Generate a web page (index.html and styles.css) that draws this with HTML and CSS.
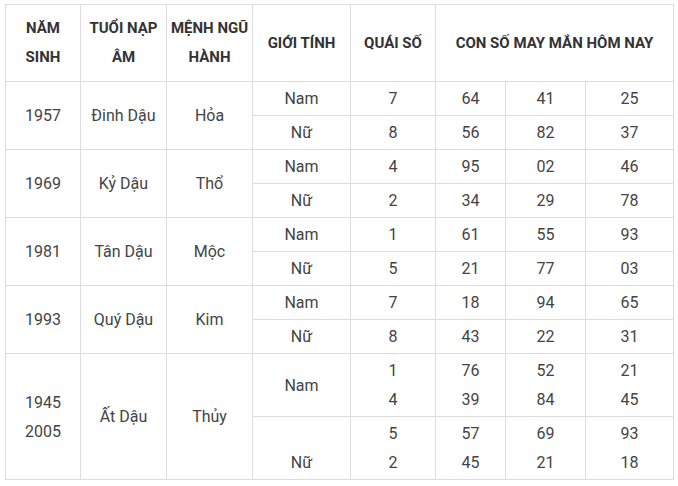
FILE: index.html
```html
<!DOCTYPE html>
<html lang="vi">
<head>
<meta charset="utf-8">
<title>Con số may mắn</title>
<link rel="stylesheet" href="styles.css">
</head>
<body>
<table class="lucky">
  <colgroup>
    <col class="c1"><col class="c2"><col class="c3"><col class="c4">
    <col class="c5"><col class="c6"><col class="c7"><col class="c8">
  </colgroup>
  <thead>
    <tr class="head">
      <th>NĂM<br>SINH</th>
      <th>TUỔI NẠP<br>ÂM</th>
      <th>MỆNH NGŨ<br>HÀNH</th>
      <th>GIỚI TÍNH</th>
      <th>QUÁI SỐ</th>
      <th colspan="3">CON SỐ MAY MẮN HÔM NAY</th>
    </tr>
  </thead>
  <tbody>
    <tr class="row"><td rowspan="2">1957</td><td rowspan="2">Đinh Dậu</td><td rowspan="2">Hỏa</td><td>Nam</td><td>7</td><td>64</td><td>41</td><td>25</td></tr>
    <tr class="row"><td>Nữ</td><td>8</td><td>56</td><td>82</td><td>37</td></tr>
    <tr class="row"><td rowspan="2">1969</td><td rowspan="2">Kỷ Dậu</td><td rowspan="2">Thổ</td><td>Nam</td><td>4</td><td>95</td><td>02</td><td>46</td></tr>
    <tr class="row"><td>Nữ</td><td>2</td><td>34</td><td>29</td><td>78</td></tr>
    <tr class="row"><td rowspan="2">1981</td><td rowspan="2">Tân Dậu</td><td rowspan="2">Mộc</td><td>Nam</td><td>1</td><td>61</td><td>55</td><td>93</td></tr>
    <tr class="row"><td>Nữ</td><td>5</td><td>21</td><td>77</td><td>03</td></tr>
    <tr class="row"><td rowspan="2">1993</td><td rowspan="2">Quý Dậu</td><td rowspan="2">Kim</td><td>Nam</td><td>7</td><td>18</td><td>94</td><td>65</td></tr>
    <tr class="row"><td>Nữ</td><td>8</td><td>43</td><td>22</td><td>31</td></tr>
    <tr class="tall"><td rowspan="2">1945<br>2005</td><td rowspan="2">Ất Dậu</td><td rowspan="2">Thủy</td><td>Nam</td><td>1<br>4</td><td>76<br>39</td><td>52<br>84</td><td>21<br>45</td></tr>
    <tr class="tall"><td><br>Nữ</td><td>5<br>2</td><td>57<br>45</td><td>69<br>21</td><td>93<br>18</td></tr>
  </tbody>
</table>
</body>
</html>
```
FILE: styles.css
```css
html, body {
  margin: 0;
  padding: 0;
  background: #ffffff;
}
body {
  padding: 4px 0 0 5px;
  font-family: Roboto, "Liberation Sans", Arial, sans-serif;
}
.lucky {
  border-collapse: collapse;
  table-layout: fixed;
  width: 669px;
  color: #444444;
  font-size: 16px;
  line-height: 29px;
}
.c1 { width: 75px; }
.c2 { width: 86px; }
.c3 { width: 86px; }
.c4 { width: 98px; }
.c5 { width: 85px; }
.c6 { width: 70px; }
.c7 { width: 80px; }
.c8 { width: 88px; }
.lucky th, .lucky td {
  border: 1px solid #dcdcdc;
  text-align: center;
  vertical-align: middle;
  padding: 0 2px;
  white-space: nowrap;
}
.lucky th {
  font-weight: 700;
  font-size: 15px;
  color: #333333;
}
.head { height: 77px; }
.row { height: 34px; }
.tall { height: 63px; }
```
